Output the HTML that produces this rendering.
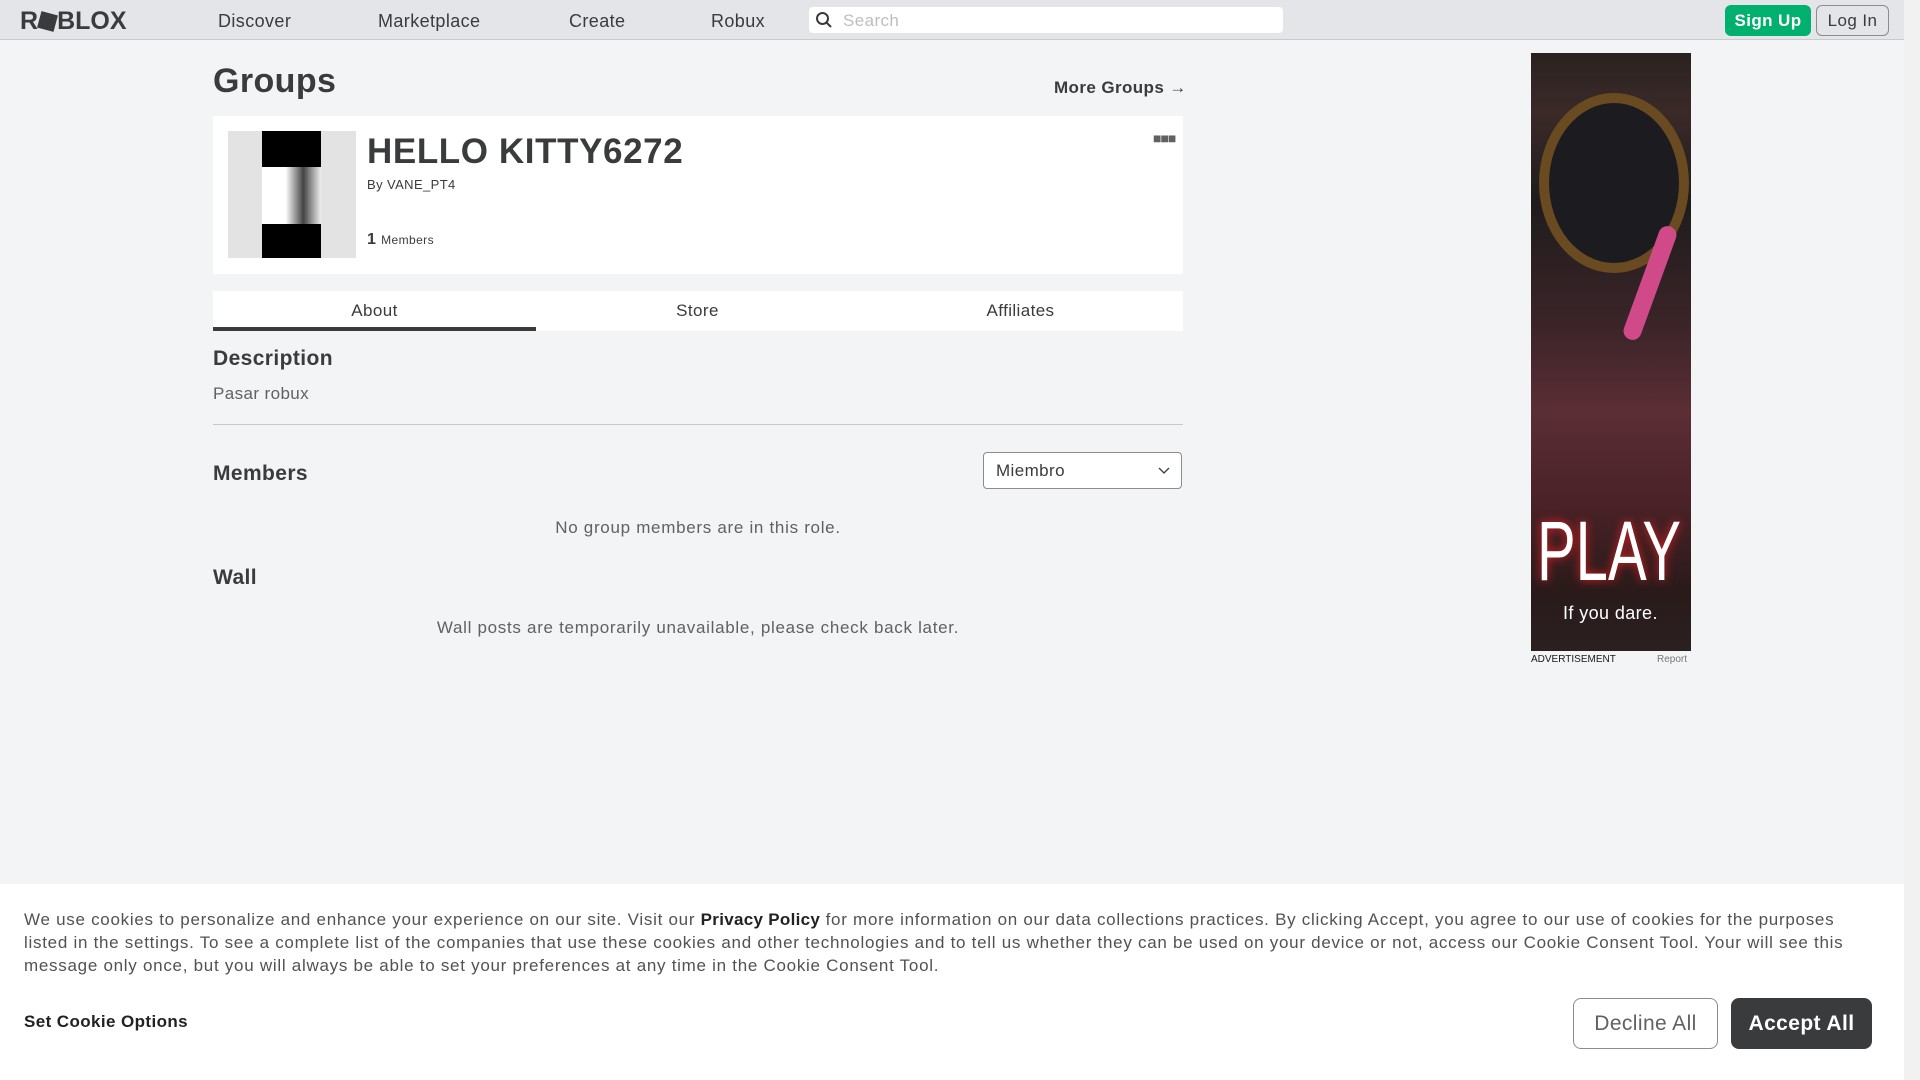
<!DOCTYPE html>
<html><head><meta charset="utf-8"><style>
*{box-sizing:border-box;margin:0;padding:0}
body{width:1920px;height:1080px;overflow:hidden;background:#f2f4f5;font-family:"Liberation Sans",sans-serif;color:#393b3d;position:relative;letter-spacing:0.4px}
.a{position:absolute}
.nav{left:0;top:0;width:1904px;height:40px;background:#e3e5e8;border-bottom:1px solid #c8cacd}
.nav .l{top:11px;font-size:18px;color:#393b3d}
.sb{left:1904px;top:0;width:16px;height:1080px;background:#f1f1f1}
</style></head><body>
<div class="a nav">
 <div class="a" style="left:20px;top:7px;font-size:25px;font-weight:900;letter-spacing:0px;color:#393b3d">R<span style="display:inline-block;width:17px;height:17px;background:#393b3d;transform:rotate(15deg);margin:0 1px;vertical-align:-1px"></span>BLOX</div>
 <div class="a l" style="left:218px">Discover</div>
 <div class="a l" style="left:378px">Marketplace</div>
 <div class="a l" style="left:569px">Create</div>
 <div class="a l" style="left:711px">Robux</div>
 <div class="a" style="left:809px;top:7px;width:474px;height:26px;background:#fff;border-radius:4px">
  <svg class="a" style="left:6px;top:4px" width="18" height="18" viewBox="0 0 18 18"><circle cx="7.5" cy="7.5" r="5.5" fill="none" stroke="#393b3d" stroke-width="2"/><path d="M11.5 11.5L16 16" stroke="#393b3d" stroke-width="2"/></svg>
  <div class="a" style="left:34px;top:4px;font-size:17px;color:#bdbebe">Search</div></div>
 <div class="a" style="left:1725px;top:5px;width:86px;height:31px;background:#00b06f;border-radius:6px;color:#fff;font-weight:bold;font-size:17px;text-align:center;line-height:31px">Sign Up</div>
 <div class="a" style="left:1816px;top:5px;width:73px;height:31px;border:1px solid #8a8c8e;border-radius:6px;font-size:17px;text-align:center;line-height:29px">Log In</div>
</div>
<div class="a sb"></div>
<div class="a" style="left:213px;top:62px;font-size:34px;font-weight:bold">Groups</div>
<div class="a" style="left:1054px;top:78px;font-size:17px;font-weight:bold;color:#393b3d">More Groups →</div>
<div class="a" style="left:213px;top:116px;width:970px;height:158px;background:#fff">
 <div class="a" style="left:15px;top:15px;width:128px;height:127px;background:#e3e3e3">
  <div class="a" style="left:34px;top:0;width:59px;height:127px;background:#000"></div>
  <div class="a" style="left:34px;top:36px;width:59px;height:57px;background:linear-gradient(90deg,#fff 40%,#444 70%,#eee)"></div>
 </div>
 <div class="a" style="left:154px;top:16px;font-size:35px;font-weight:bold;color:#393b3d;letter-spacing:0.6px">HELLO KITTY6272</div>
 <div class="a" style="left:154px;top:61px;font-size:13px">By <span style="color:#393b3d">VANE_PT4</span></div>
 <div class="a" style="left:154px;top:115px;font-size:16px;font-weight:bold">1 <span style="font-size:12px;font-weight:normal">Members</span></div>
 <div class="a" style="left:940px;top:14px;font-size:14px;letter-spacing:-1px;color:#606162">■■■</div>
</div>
<div class="a" style="left:213px;top:291px;width:970px;height:40px;background:#fff;font-size:17px">
 <div class="a" style="left:0;width:323px;top:10px;text-align:center">About</div>
 <div class="a" style="left:323px;width:323px;top:10px;text-align:center">Store</div>
 <div class="a" style="left:646px;width:323px;top:10px;text-align:center">Affiliates</div>
 <div class="a" style="left:0;top:36px;width:323px;height:4px;background:#393b3d"></div>
</div>
<div class="a" style="left:213px;top:347px;font-size:21px;font-weight:bold">Description</div>
<div class="a" style="left:213px;top:384px;font-size:17px;color:#606162">Pasar robux</div>
<div class="a" style="left:213px;top:424px;width:970px;height:1px;background:#c8c9ca"></div>
<div class="a" style="left:213px;top:462px;font-size:21px;font-weight:bold">Members</div>
<div class="a" style="left:983px;top:452px;width:199px;height:37px;border:1px solid #8a8c8e;border-radius:4px;background:#fff">
 <div class="a" style="left:12px;top:8px;font-size:17px">Miembro</div>
 <svg class="a" style="left:174px;top:14px" width="12" height="8" viewBox="0 0 12 8"><path d="M1 1l5 5 5-5" fill="none" stroke="#393b3d" stroke-width="1.3"/></svg>
</div>
<div class="a" style="left:213px;width:970px;top:518px;text-align:center;font-size:17px;color:#606162;letter-spacing:0.7px">No group members are in this role.</div>
<div class="a" style="left:213px;top:566px;font-size:21px;font-weight:bold">Wall</div>
<div class="a" style="left:213px;width:970px;top:618px;text-align:center;font-size:17px;color:#606162;letter-spacing:0.7px">Wall posts are temporarily unavailable, please check back later.</div>
<div class="a" style="left:1531px;top:53px;width:160px;height:598px;overflow:hidden;background:linear-gradient(180deg,#2a2220 0%,#3a2a28 10%,#1f1c1c 25%,#3a2428 45%,#5a2e34 60%,#4a2228 75%,#2a1a1a 90%,#2b2020 100%)">
 <div class="a" style="left:8px;top:40px;width:150px;height:180px;border-radius:50%;border:10px solid #6a4a20;background:#1c1c20"></div>
 <div class="a" style="left:110px;top:170px;width:18px;height:120px;background:#d04a8a;border-radius:9px;transform:rotate(20deg)"></div>
 <div class="a" style="left:6px;top:450px;font-size:58px;color:#fff;font-family:'Liberation Sans',sans-serif;text-shadow:0 0 8px #e02020;letter-spacing:0px;transform:scaleY(1.45);transform-origin:top left">PLAY</div>
 <div class="a" style="left:32px;top:550px;font-size:18px;color:#fff">If you dare.</div>
</div>
<div class="a" style="left:1531px;top:654px;font-size:10px;color:#191919;letter-spacing:0">ADVERTISEMENT</div>
<div class="a" style="left:1657px;top:654px;font-size:10px;color:#777;letter-spacing:0">Report</div>
<div class="a" style="left:0;top:884px;width:1904px;height:196px;background:#fff">
 <div class="a" style="left:24px;top:24px;width:1856px;font-size:17px;line-height:23px;color:#505254;letter-spacing:0.72px">We use cookies to personalize and enhance your experience on our site. Visit our <b style="color:#222;letter-spacing:0.3px">Privacy Policy</b> for more information on our data collections practices. By clicking Accept, you agree to our use of cookies for the purposes listed in the settings. To see a complete list of the companies that use these cookies and other technologies and to tell us whether they can be used on your device or not, access our Cookie Consent Tool. Your will see this message only once, but you will always be able to set your preferences at any time in the Cookie Consent Tool.</div>
 <div class="a" style="left:24px;top:128px;font-size:17px;font-weight:bold;color:#222">Set Cookie Options</div>
 <div class="a" style="left:1573px;top:114px;width:145px;height:51px;border:1px solid #8a8c8e;border-radius:8px;font-size:21px;text-align:center;line-height:49px;color:#606162">Decline All</div>
 <div class="a" style="left:1731px;top:114px;width:141px;height:51px;background:#393b3d;border-radius:8px;font-size:21px;text-align:center;line-height:51px;color:#fff;font-weight:bold">Accept All</div>
</div>
</body></html>
